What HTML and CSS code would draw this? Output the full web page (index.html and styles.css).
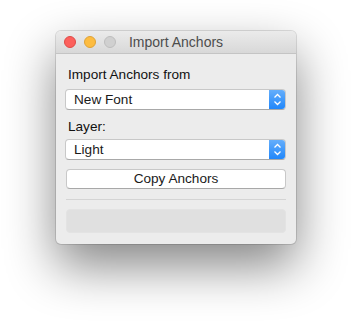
FILE: index.html
```html
<!DOCTYPE html>
<html>
<head>
<meta charset="utf-8">
<link rel="stylesheet" href="styles.css">
</head>
<body>
<div class="window">
  <div class="titlebar">
    <div class="lights">
      <span class="light red"></span>
      <span class="light yellow"></span>
      <span class="light gray"></span>
    </div>
    <div class="title">Import Anchors</div>
    <div></div>
  </div>
  <div class="content">
    <div class="label first">Import Anchors from</div>
    <div class="popup p1">
      <span class="popup-text">New Font</span>
      <span class="stepper">
        <svg width="17" height="21" viewBox="0 0 17 21"><path d="M5.5 8.5 L8.5 5.5 L11.5 8.5 M5.5 12.5 L8.5 15.5 L11.5 12.5" fill="none" stroke="#fff" stroke-width="1.3"/></svg>
      </span>
    </div>
    <div class="label second">Layer:</div>
    <div class="popup p2">
      <span class="popup-text">Light</span>
      <span class="stepper">
        <svg width="17" height="21" viewBox="0 0 17 21"><path d="M5.5 8.5 L8.5 5.5 L11.5 8.5 M5.5 12.5 L8.5 15.5 L11.5 12.5" fill="none" stroke="#fff" stroke-width="1.3"/></svg>
      </span>
    </div>
    <div class="button">Copy Anchors</div>
    <div class="separator"></div>
    <div class="progress"></div>
  </div>
</div>
</body>
</html>
```

FILE: styles.css
```css
html {
  margin: 0;
  background: #ffffff;
  height: 324px;
}
body {
  margin: 0;
  height: 324px;
  box-sizing: border-box;
  padding: 31px 0 0 56px;
  font-family: "Liberation Sans", Arial, sans-serif;
  font-size: 13.6px;
  color: #1a1a1a;
}
.window {
  width: 240px;
  height: 213px;
  box-sizing: border-box;
  background: #ececec;
  border-radius: 5px;
  box-shadow: 0 22px 50px rgba(0,0,0,0.48), 0 0 0 1px rgba(0,0,0,0.12);
  overflow: hidden;
}
.titlebar {
  height: 22px;
  border-bottom: 1px solid #c4c4c4;
  background: linear-gradient(#ebebeb, #d8d8d8);
  display: grid;
  grid-template-columns: 1fr auto 1fr;
  align-items: center;
}
.lights {
  display: flex;
  gap: 8px;
  padding-left: 8px;
}
.light {
  width: 12px;
  height: 12px;
  box-sizing: border-box;
  border-radius: 50%;
}
.red { background: #fc605c; border: 1px solid #de4a46; }
.yellow { background: #fdbc40; border: 1px solid #dea236; }
.gray { background: #d0d0d0; border: 1px solid #bdbdbd; }
.title {
  color: #4d4d4d;
  font-size: 14px;
  line-height: 16px;
}
.content {
  padding: 0 10px 0 9px;
  display: flex;
  flex-direction: column;
}
.label {
  line-height: 16px;
  margin-left: 3px;
  color: #111;
}
.label.first { margin-top: 13px; }
.label.second { margin-top: 9px; }
.popup {
  height: 21px;
  box-sizing: border-box;
  background: #fff;
  border: 1px solid #c8c8c8;
  border-bottom-color: #a8a8a8;
  border-radius: 4px;
  display: flex;
  align-items: stretch;
  overflow: hidden;
}
.p1 { margin-top: 6px; }
.p2 { margin-top: 4px; }
.popup-text {
  flex: 1;
  padding-left: 8px;
  line-height: 19px;
}
.stepper {
  width: 17px;
  margin: -1px -1px -1px 0;
  background: linear-gradient(#68b0fb, #1d85fb);
  border-radius: 0 4px 4px 0;
  display: flex;
}
.button {
  margin-top: 9px;
  margin-left: 1px;
  height: 20px;
  box-sizing: border-box;
  background: #fff;
  border: 1px solid #c8c8c8;
  border-bottom-color: #a8a8a8;
  border-radius: 4px;
  text-align: center;
  line-height: 18px;
}
.separator {
  margin-top: 10px;
  margin-left: 1px;
  height: 1px;
  background: #d4d4d4;
}
.progress {
  margin-top: 9px;
  margin-left: 1px;
  height: 24px;
  background: #e0e0e0;
  border: 1px solid #e3e3e3;
  box-sizing: border-box;
  border-radius: 4px;
}
```
